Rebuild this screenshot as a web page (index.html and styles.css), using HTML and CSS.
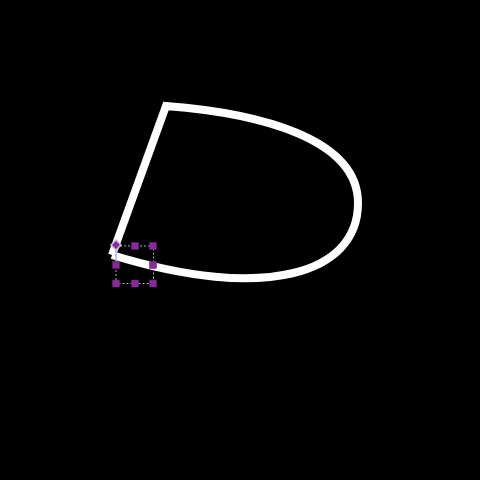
FILE: index.html
```html
<!DOCTYPE html>
<html lang="en">
<head>
  <meta charset="UTF-8">
  <meta name="viewport" content="width=device-width, initial-scale=1.0">
  <title>Shape editor</title>
  <link rel="stylesheet" href="styles.css">
</head>
<body>
  <div class="canvas">
    <svg class="stage" width="480" height="480" viewBox="0 0 480 480">
      <!-- the shape -->
      <path class="shape" d="M112 255 L166 106 C258 113 358 138 358 203 C358 274 265 302 112 255"/>

      <!-- selection box on the start point -->
      <g class="selection">
        <rect class="sel-box" x="116" y="246" width="37.5" height="37.5"/>
        <line class="sel-stem" x1="116" y1="246" x2="116" y2="262"/>
        <rect class="handle" x="131.5" y="242.5" width="7" height="7"/>
        <rect class="handle" x="149.5" y="242.5" width="7" height="7"/>
        <rect class="handle" x="112.5" y="261.5" width="7" height="7"/>
        <rect class="handle" x="149.5" y="261.5" width="7" height="7"/>
        <rect class="handle" x="112.5" y="280" width="7" height="7"/>
        <rect class="handle" x="131.5" y="280" width="7" height="7"/>
        <rect class="handle" x="149.5" y="280" width="7" height="7"/>
        <rect class="pivot" x="112.5" y="241.5" width="7" height="7" transform="rotate(45 116 245)"/>
      </g>
    </svg>
  </div>
</body>
</html>
```
FILE: styles.css
```css
body {
  margin: 0;
  padding: 0;
  background-color: #000;
  font-family: "Liberation Sans", Arial, sans-serif;
}
.canvas {
  width: 480px;
  height: 480px;
  background-color: #000;
  overflow: hidden;
}
.stage {
  display: block;
}
.shape {
  fill: none;
  stroke: #fff;
  stroke-width: 8;
  stroke-linejoin: miter;
  stroke-miterlimit: 10;
}
.sel-box {
  fill: none;
  stroke: #b9a6c6;
  stroke-width: 1;
  stroke-dasharray: 2 2;
}
.sel-stem {
  stroke: #a9b8e8;
  stroke-width: 1.5;
}
.handle {
  fill: #8a2a9a;
  stroke: #6d1f7a;
  stroke-width: 0.5;
}
.pivot {
  fill: #8a2a9a;
  stroke: #c9b6e0;
  stroke-width: 1.5;
}
```
